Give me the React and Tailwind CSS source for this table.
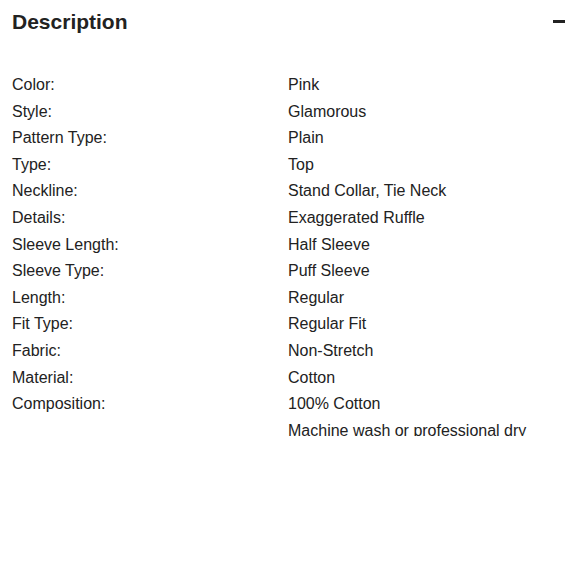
const specs = [
  ["Color:", "Pink"],
  ["Style:", "Glamorous"],
  ["Pattern Type:", "Plain"],
  ["Type:", "Top"],
  ["Neckline:", "Stand Collar, Tie Neck"],
  ["Details:", "Exaggerated Ruffle"],
  ["Sleeve Length:", "Half Sleeve"],
  ["Sleeve Type:", "Puff Sleeve"],
  ["Length:", "Regular"],
  ["Fit Type:", "Regular Fit"],
  ["Fabric:", "Non-Stretch"],
  ["Material:", "Cotton"],
  ["Composition:", "100% Cotton"],
  ["", "Machine wash or professional dry"],
];

const App = () => {
  return (
    <div className="w-[580px] h-[580px] bg-white font-['Liberation_Sans',Arial,sans-serif] text-[#222]">
      <div className="h-[436px] overflow-hidden pl-3 pr-[15px]">
        {/* Header */}
        <div className="flex items-center justify-between pt-[8px]">
          <h2 className="text-[21px] leading-[28px] font-bold text-[#222]">
            Description
          </h2>
          <span className="block w-[12px] h-[2.5px] bg-[#222] -mt-[1px]"></span>
        </div>

        {/* Specs */}
        <div className="mt-[36px] text-[16px] leading-[26.6px]">
          {specs.map(([label, value], i) => (
            <div key={i} className="grid grid-cols-[276px_1fr]">
              <div>{label}</div>
              <div>{value}</div>
            </div>
          ))}
        </div>
      </div>
    </div>
  );
};

export default App;
